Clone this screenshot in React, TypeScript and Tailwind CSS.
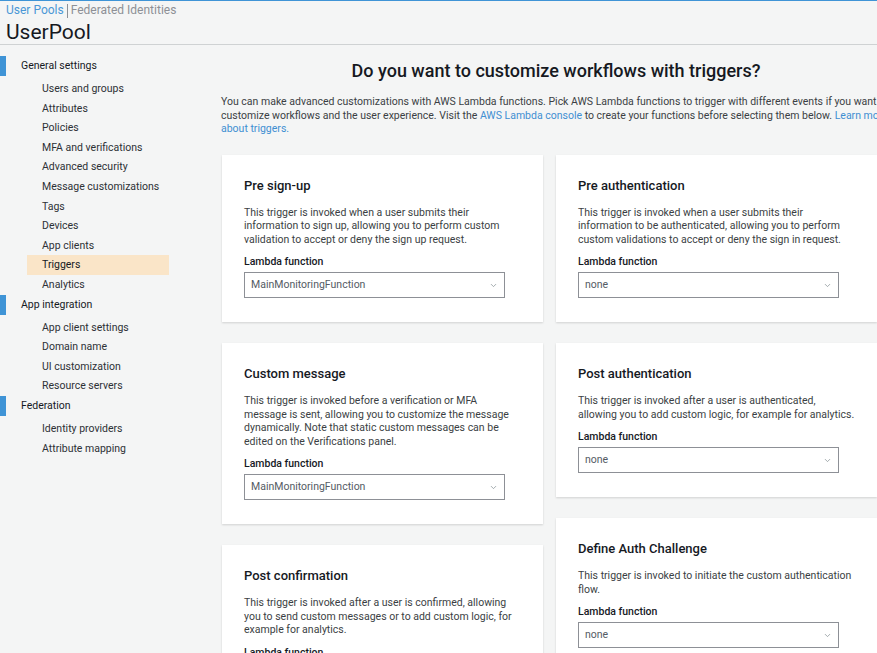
import { ChevronDown } from "lucide-react";

type Trigger = {
  title: string;
  desc: string;
  value: string;
};

const leftColumn: Trigger[] = [
  {
    title: "Pre sign-up",
    desc: "This trigger is invoked when a user submits their information to sign up, allowing you to perform custom validation to accept or deny the sign up request.",
    value: "MainMonitoringFunction",
  },
  {
    title: "Custom message",
    desc: "This trigger is invoked before a verification or MFA message is sent, allowing you to customize the message dynamically. Note that static custom messages can be edited on the Verifications panel.",
    value: "MainMonitoringFunction",
  },
  {
    title: "Post confirmation",
    desc: "This trigger is invoked after a user is confirmed, allowing you to send custom messages or to add custom logic, for example for analytics.",
    value: "none",
  },
];

const rightColumn: Trigger[] = [
  {
    title: "Pre authentication",
    desc: "This trigger is invoked when a user submits their information to be authenticated, allowing you to perform custom validations to accept or deny the sign in request.",
    value: "none",
  },
  {
    title: "Post authentication",
    desc: "This trigger is invoked after a user is authenticated, allowing you to add custom logic, for example for analytics.",
    value: "none",
  },
  {
    title: "Define Auth Challenge",
    desc: "This trigger is invoked to initiate the custom authentication flow.",
    value: "none",
  },
];

const nav = [
  {
    label: "General settings",
    items: [
      "Users and groups",
      "Attributes",
      "Policies",
      "MFA and verifications",
      "Advanced security",
      "Message customizations",
      "Tags",
      "Devices",
      "App clients",
      "Triggers",
      "Analytics",
    ],
  },
  {
    label: "App integration",
    items: [
      "App client settings",
      "Domain name",
      "UI customization",
      "Resource servers",
    ],
  },
  {
    label: "Federation",
    items: ["Identity providers", "Attribute mapping"],
  },
];

function TriggerCard({ t }: { t: Trigger }) {
  return (
    <div className="bg-white shadow-[0_1px_2px_rgba(0,0,0,0.15)] px-[22px] pt-[22px] pb-[24px]">
      <h3 className="text-[13px] leading-[17px] font-medium text-[#16191f]">
        {t.title}
      </h3>
      <p className="mt-[12px] text-[10.5px] leading-[13.5px] text-[#3b3f44]">
        {t.desc}
      </p>
      <div className="mt-[9px] text-[10.5px] leading-[14px] font-medium text-[#16191f]">
        Lambda function
      </div>
      <div className="mt-[3px] w-[261px] h-[26px] border border-[#8d9096] flex items-center justify-between pl-[6px] pr-[6px] bg-white">
        <span className="text-[10.5px] text-[#545b64]">{t.value}</span>
        <ChevronDown className="w-[9px] h-[9px] text-[#879196]" strokeWidth={2} />
      </div>
    </div>
  );
}

export default function App() {
  return (
    <div
      className="w-[877px] h-[653px] overflow-hidden bg-[#f4f5f5] text-[#16191f] border-t border-[#3f94d6]"
      style={{ fontFamily: "Roboto, 'Liberation Sans', sans-serif" }}
    >
      {/* Header */}
      <div className="border-b border-[#cfd2d3] h-[44px] px-[6px] pt-px">
        <div className="flex items-center h-[17px] text-[12px] leading-[17px]">
          <span className="text-[#4a97d6]">User Pools</span>
          <span className="mx-[3px] w-px h-[14px] bg-[#8d9096]" />
          <span className="text-[#8d9096]">Federated Identities</span>
        </div>
        <h1 className="text-[21px] leading-[26px] font-normal text-[#16191f]">
          UserPool
        </h1>
      </div>

      <div className="flex">
        {/* Sidebar */}
        <nav className="w-[221px] shrink-0 pt-[11px] text-[10.5px]">
          {nav.map(section => (
            <div key={section.label}>
              <div className="flex items-center h-[20px]">
                <span className="w-[6px] h-[20px] bg-[#3f94d6]" />
                <span className="ml-[15px] text-[#16191f]">{section.label}</span>
              </div>
              <ul className="pt-[3px]">
                {section.items.map(item => (
                  <li
                    key={item}
                    className={
                      item === "Triggers"
                        ? "ml-[27px] w-[142px] h-[19.6px] leading-[19.6px] pl-[15px] bg-[#fae5c8] text-[#16191f]"
                        : "ml-[27px] h-[19.6px] leading-[19.6px] pl-[15px] text-[#2d3136]"
                    }
                  >
                    {item}
                  </li>
                ))}
              </ul>
            </div>
          ))}
        </nav>

        {/* Main */}
        <main className="w-[670px] shrink-0">
          <h2 className="mt-[14px] text-center text-[18px] leading-[24px] font-medium text-[#16191f]">
            Do you want to customize workflows with triggers?
          </h2>
          <p className="mt-[12px] text-[10.5px] leading-[13.5px] text-[#3b3f44]">
            You can make advanced customizations with AWS Lambda functions. Pick
            AWS Lambda functions to trigger with different events if you want to
            customize workflows and the user experience. Visit the{" "}
            <span className="text-[#3f8fd2]">AWS Lambda console</span> to create
            your functions before selecting them below.{" "}
            <span className="text-[#3f8fd2]">Learn more about triggers.</span>
          </p>

          <div className="mt-[19px] ml-px flex gap-[13px] items-start">
            <div className="w-[321px] flex flex-col gap-[21px]">
              {leftColumn.map(t => (
                <TriggerCard key={t.title} t={t} />
              ))}
            </div>
            <div className="w-[321px] flex flex-col gap-[21px]">
              {rightColumn.map(t => (
                <TriggerCard key={t.title} t={t} />
              ))}
            </div>
          </div>
        </main>
      </div>
    </div>
  );
}
